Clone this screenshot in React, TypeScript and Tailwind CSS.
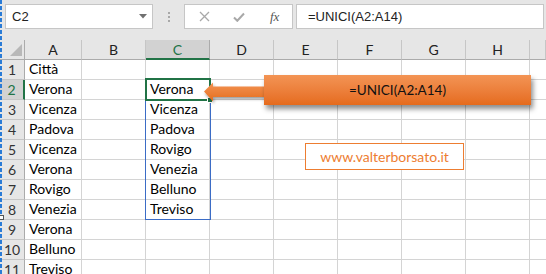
import React from "react";

const cols = ["A", "B", "C", "D", "E", "F", "G", "H", ""];
const colA = ["Città", "Verona", "Vicenza", "Padova", "Vicenza", "Verona", "Rovigo", "Venezia", "Verona", "Belluno", "Treviso"];
const colC = ["", "Verona", "Vicenza", "Padova", "Rovigo", "Venezia", "Belluno", "Treviso", "", "", ""];

export default function App() {
  return (
    <div className="relative w-[546px] h-[274px] overflow-hidden bg-white font-['Lato',sans-serif] text-black">
      {/* Top bar */}
      <div className="h-[40px] bg-[#e6e6e6] flex items-start pt-[4px] pl-[5px] font-['Liberation_Sans',sans-serif]">
        <div className="w-[148px] h-[25px] bg-white border border-[#c6c6c6] flex items-center justify-between pl-[6px] pr-[5px]">
          <span className="text-[13px] text-[#222]">C2</span>
          <svg width="8" height="5" viewBox="0 0 8 5"><polygon points="0,0 8,0 4,4.5" fill="#707070" /></svg>
        </div>
        <div className="w-[31px] h-[25px] flex flex-col items-center justify-center gap-[2px]">
          <div className="w-[2px] h-[2px] bg-[#a8a8a8]" />
          <div className="w-[2px] h-[2px] bg-[#a8a8a8]" />
          <div className="w-[2px] h-[2px] bg-[#a8a8a8]" />
        </div>
        <div className="w-[109px] h-[25px] bg-white border border-[#c6c6c6] flex items-center pl-[14px]">
          <svg width="11" height="11" viewBox="0 0 11 11"><path d="M1 1 L10 10 M10 1 L1 10" stroke="#a8a8a8" strokeWidth="1.3" /></svg>
          <svg className="ml-[23px]" width="12" height="10" viewBox="0 0 12 10"><path d="M1 5.5 L4.3 8.8 L11 1.5" stroke="#a8a8a8" strokeWidth="2" fill="none" /></svg>
          <span className="ml-[25px] font-['Liberation_Serif',serif] italic text-[13px] text-[#555] leading-none">fx</span>
        </div>
        <div className="ml-[3px] w-[248px] h-[25px] bg-white border border-[#c6c6c6] flex items-center pl-[11px]">
          <span className="text-[13px] text-[#222]">=UNICI(A2:A14)</span>
        </div>
      </div>

      {/* Grid */}
      <div className="grid grid-cols-[25px_57px_64px_64px_64px_64px_64px_64px_64px_16px]">
        {/* header row */}
        <div className="h-[20px] bg-[#e6e6e6] border-r border-b border-[#ababab] relative">
          <svg className="absolute left-[10px] top-[4px]" width="13" height="13" viewBox="0 0 13 13"><polygon points="12,0 12,12 0,12" fill="#b8b8b8" /></svg>
        </div>
        {cols.map((c, i) =>
          c === "C" ? (
            <div key={i} className="h-[20px] bg-[#d2d2d2] border-r border-[#ababab] border-b-2 border-b-[#217346] flex items-center justify-center text-[14px] text-[#217346]">
              {c}
            </div>
          ) : (
            <div key={i} className="h-[20px] bg-[#e6e6e6] border-r border-b border-r-[#c6c6c6] border-b-[#ababab] flex items-center justify-center text-[14px] text-[#222]">
              {c}
            </div>
          )
        )}
        {/* rows */}
        {colA.map((a, r) => (
          <React.Fragment key={r}>
            <div
              className={
                r === 1
                  ? "h-[20px] bg-[#d2d2d2] border-b border-[#c6c6c6] border-r-2 border-r-[#217346] flex items-center justify-center text-[14px] text-[#217346]"
                  : "h-[20px] bg-[#e6e6e6] border-b border-r border-b-[#c6c6c6] border-r-[#ababab] flex items-center justify-center text-[14px] text-[#333]"
              }
            >
              {r + 1}
            </div>
            <div className="h-[20px] border-r border-b border-[#d4d4d4] pl-[4px] text-[14px] leading-[18px]">{a}</div>
            <div className="h-[20px] border-r border-b border-[#d4d4d4]" />
            <div className="h-[20px] border-r border-b border-[#d4d4d4] pl-[4px] text-[14px] leading-[18px]">{colC[r]}</div>
            <div className="h-[20px] border-r border-b border-[#d4d4d4]" />
            <div className="h-[20px] border-r border-b border-[#d4d4d4]" />
            <div className="h-[20px] border-r border-b border-[#d4d4d4]" />
            <div className="h-[20px] border-r border-b border-[#d4d4d4]" />
            <div className="h-[20px] border-r border-b border-[#d4d4d4]" />
            <div className="h-[20px] border-b border-[#d4d4d4]" />
          </React.Fragment>
        ))}
      </div>

      {/* spill range (blue) */}
      <div className="absolute left-[145px] top-[79px] w-[66px] h-[141px] border border-[#3b6cc6]" />
      {/* active cell */}
      <div className="absolute left-[145px] top-[78px] w-[66px] h-[23px] border-2 border-[#217346]" />
      <div className="absolute left-[207px] top-[97px] w-[6px] h-[6px] bg-[#217346] border border-white" />

      {/* callout arrow */}
      <svg className="absolute left-[200px] top-[78px]" width="72" height="30" viewBox="0 0 72 30">
        <defs>
          <linearGradient id="ag" x1="0" y1="0" x2="0" y2="1">
            <stop offset="0" stopColor="#f39454" />
            <stop offset="1" stopColor="#e56d1e" />
          </linearGradient>
          <filter id="sh" x="-20%" y="-30%" width="140%" height="170%">
            <feDropShadow dx="1" dy="2" stdDeviation="1.5" floodColor="#000" floodOpacity="0.4" />
          </filter>
        </defs>
        <polygon points="4,13.5 13,4.5 13,8.5 70,8.5 70,19 13,19 13,23.5" fill="url(#ag)" filter="url(#sh)" />
      </svg>
      {/* callout box */}
      <div className="absolute left-[264px] top-[75px] w-[267px] h-[30px] bg-linear-to-b from-[#f39454] to-[#e56b1c] shadow-[2px_4px_5px_rgba(0,0,0,0.45)] flex items-center justify-center text-[13.5px] text-[#111]">
        =UNICI(A2:A14)
      </div>

      {/* watermark */}
      <div className="absolute left-[305px] top-[143px] w-[159px] h-[27px] border border-[#ed7d31] bg-white flex items-center justify-center text-[14px] text-[#ed7d31]">
        www.valterborsato.it
      </div>

      {/* dashed left marquee */}
      <div className="absolute left-0 top-0 w-[2px] h-full bg-[repeating-linear-gradient(to_bottom,#2a7bd6_0px,#2a7bd6_4px,transparent_4px,transparent_6px)]" />
      <div className="absolute left-[-1px] top-[215px] w-[5px] h-[5px] bg-white border border-[#555]" />
    </div>
  );
}
